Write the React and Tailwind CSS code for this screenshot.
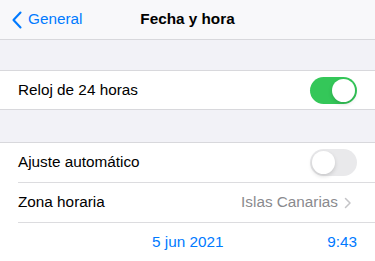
import React from "react";

const Toggle = ({ on }) => (
  <div
    className={`w-[47px] h-[27px] rounded-full p-[2px] flex ${
      on ? "bg-[#34c759] justify-end" : "bg-[#e9e9eb] justify-start"
    }`}
  >
    <div className="w-[23px] h-[23px] rounded-full bg-white shadow-[0_2px_4px_rgba(0,0,0,0.15)]" />
  </div>
);

const Chevron = () => (
  <svg width="8" height="12" viewBox="0 0 8 12" fill="none">
    <path d="M1.5 1.5 L6 6 L1.5 10.5" stroke="#c4c4c7" strokeWidth="1.5" strokeLinecap="round" strokeLinejoin="round" />
  </svg>
);

export default function App() {
  return (
    <div className="w-[375px] h-[261px] overflow-hidden bg-[#f2f2f7] font-['Liberation_Sans',Arial,sans-serif] text-[15.3px] text-black">
      {/* nav bar */}
      <div className="relative h-[40px] bg-[#f8f8fa] border-b border-[#d8d8dc] flex items-center">
        <div className="flex items-center pl-[11px] text-[#007aff]">
          <svg width="12" height="18" viewBox="0 0 12 18" fill="none">
            <path d="M9.5 1.5 L2.5 9 L9.5 16.5" stroke="#007aff" strokeWidth="2.1" strokeLinecap="round" strokeLinejoin="round" />
          </svg>
          <span className="ml-[5px]">General</span>
        </div>
        <div className="absolute inset-0 flex items-center justify-center font-semibold pointer-events-none">
          Fecha y hora
        </div>
      </div>

      <div className="h-[30px]" />

      <div className="bg-white border-y border-[#d8d8dc] h-[40px] flex items-center justify-between pl-[18px] pr-[18px]">
        <span>Reloj de 24 horas</span>
        <Toggle on />
      </div>

      <div className="h-[32px]" />

      <div className="bg-white border-t border-[#d8d8dc]">
        <div className="h-[39px] flex items-center justify-between pl-[18px] pr-[18px]">
          <span>Ajuste automático</span>
          <Toggle />
        </div>
        <div className="ml-[18px] border-t border-[#dcdcdf] h-[40px] flex items-center justify-between pr-[23px]">
          <span>Zona horaria</span>
          <div className="flex items-center gap-[6px] text-[#8a8a8e]">
            <span>Islas Canarias</span>
            <Chevron />
          </div>
        </div>
        <div className="ml-[18px] border-t border-[#dcdcdf] h-[40px] flex items-center text-[#007aff] pr-[18px]">
          <span className="ml-[134px]">5 jun 2021</span>
          <span className="ml-auto">9:43</span>
        </div>
      </div>
    </div>
  );
}
